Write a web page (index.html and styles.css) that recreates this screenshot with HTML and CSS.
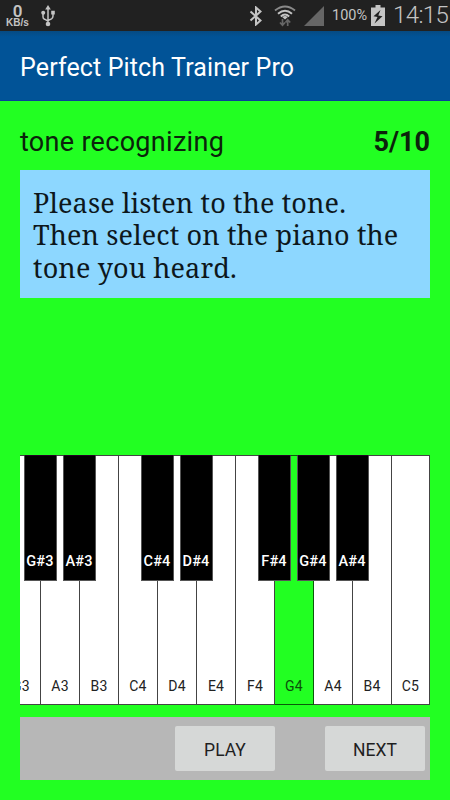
FILE: index.html
```
<!DOCTYPE html>
<html lang="en">
<head>
    <meta charset="utf-8">
    <title>Perfect Pitch Trainer Pro</title>
    <link rel="stylesheet" href="styles.css">
</head>
<body>

    <div class="status-bar">
        <div class="speed">
            <span class="speed-value">0</span>
            <span class="speed-unit">KB/s</span>
        </div>
        <svg class="usb" width="14" height="22" viewBox="0 0 14 22">
            <path d="M7 3v16M2 8v4q0 1.500 1.500 2.200L7 16M12 8v3q0 2-1.500 2.800L7 15.500" fill="none" stroke="#c4c4c4" stroke-width="1.500"/>
            <path d="M7 0l2.800 4.500h-5.600z" fill="#c4c4c4"/>
            <circle cx="7" cy="19" r="2.300" fill="#c4c4c4"/>
            <circle cx="2.200" cy="7.800" r="2" fill="#c4c4c4"/>
            <path d="M10.200 5.800h3.600v3.600h-3.600z" fill="#c4c4c4"/>
        </svg>
        <svg class="bluetooth" width="14" height="20" viewBox="0 0 14 20">
            <path d="M1.500 5.500l10 9L7 18.500V1.500l4.500 4-10 9" fill="none" stroke="#c4c4c4" stroke-width="2"/>
        </svg>
        <svg class="wifi" width="22" height="22" viewBox="0 0 22 22">
            <g fill="none" stroke="#c4c4c4" stroke-width="1.900">
                <path d="M1 5.500Q11-2.500 21 5.500" stroke="#8a8a8a"/>
                <path d="M4 8.800Q11 2.500 18 8.800"/>
                <path d="M6.800 11.500Q11 7.500 15.200 11.500"/>
            </g>
            <path d="M8.200 12Q11 9.800 13.800 12L11 14.500z" fill="#c4c4c4"/>
            <path d="M8.500 14v6M6 17.500l2.500 2.800 2.500-2.800M13.700 21v-6M11.500 17.500l2.200-2.800 2.500 2.800" fill="none" stroke="#666" stroke-width="1.700"/>
        </svg>
        <svg class="signal" width="20" height="20" viewBox="0 0 20 20">
            <path d="M20 0v20H0z" fill="#666"/>
        </svg>
        <span class="percent">100%</span>
        <svg class="battery" width="14" height="21" viewBox="0 0 14 21">
            <path d="M4.500 0h5v2.500H14V21H0V2.500h4.500z" fill="#c4c4c4"/>
            <path d="M9.500 5L2.500 11.200l4 .8-3 6.500 8-7.200-4.200-.8z" fill="#212121"/>
        </svg>
        <span class="clock">14:15</span>
    </div>

    <div class="header">
        <h1>Perfect Pitch Trainer Pro</h1>
    </div>

    <div class="content">
        <div class="exercise">
            <span class="exercise-name">tone recognizing</span>
            <span class="exercise-count">5/10</span>
        </div>

        <div class="instructions">
            Please listen to the tone.<br>
            Then select on the piano the<br>
            tone you heard.
        </div>

        <div class="piano">
            <div class="key">G3<div class="black-key">G#3</div></div>
            <div class="key">A3<div class="black-key">A#3</div></div>
            <div class="key">B3</div>
            <div class="key">C4<div class="black-key">C#4</div></div>
            <div class="key">D4<div class="black-key">D#4</div></div>
            <div class="key">E4</div>
            <div class="key">F4<div class="black-key">F#4</div></div>
            <div class="key selected">G4<div class="black-key">G#4</div></div>
            <div class="key">A4<div class="black-key">A#4</div></div>
            <div class="key">B4</div>
            <div class="key">C5</div>
        </div>

        <div class="buttons">
            <button class="button">PLAY</button>
            <button class="button">NEXT</button>
        </div>
    </div>

</body>
</html>
```
FILE: styles.css
```
* {
    box-sizing: border-box;
}
body {
    margin: 0;
    height: 800px;
    display: flex;
    flex-direction: column;
    background-color: #22ff22;
    font-family: Roboto, sans-serif;
    overflow: hidden;
}
.status-bar {
    height: 31px;
    display: flex;
    align-items: center;
    padding: 0 3px 0 6px;
    background-color: #212121;
    color: #c4c4c4;
}
.speed {
    width: 23px;
    display: flex;
    flex-direction: column;
    align-items: center;
}
.speed-value {
    font-size: 17px;
    font-weight: 600;
    line-height: 14px;
}
.speed-unit {
    font-family: "Liberation Sans", sans-serif;
    font-size: 10px;
    font-weight: bold;
    line-height: 9px;
}
.usb {
    margin-left: 12px;
}
.bluetooth {
    margin-left: auto;
}
.wifi {
    margin-left: 11px;
    margin-top: 1px;
}
.signal {
    margin-left: 8px;
}
.percent {
    margin-left: 8px;
    width: 35px;
    font-size: 14.5px;
    white-space: nowrap;
}
.battery {
    margin-left: 4px;
}
.clock {
    margin-left: 8px;
    margin-top: -2px;
    width: 54px;
    font-size: 24px;
    font-weight: 300;
    letter-spacing: -0.6px;
    white-space: nowrap;
}
.header {
    height: 70px;
    display: flex;
    align-items: center;
    padding: 3px 20px 0;
    background: linear-gradient(#064a82, #015397 6px);
    border-bottom: 1px solid #0a3f9b;
}
.header h1 {
    margin: 0;
    color: #fff;
    font-size: 25px;
    font-weight: normal;
    letter-spacing: 0.13px;
}
.content {
    flex-grow: 1;
    display: flex;
    flex-direction: column;
    padding: 25px 20px 20px;
}
.exercise {
    height: 44px;
    display: flex;
    justify-content: space-between;
    line-height: 33px;
    color: #0b230b;
    font-size: 27px;
}
.exercise-name {
    letter-spacing: 0.3px;
}
.exercise-count {
    font-weight: bold;
}
.instructions {
    height: 128px;
    padding: 16.5px 13px;
    background-color: #8dd7ff;
    color: #0d171c;
    font-family: "Noto Serif", "DejaVu Serif Condensed", "DejaVu Serif", serif;
    font-size: 27px;
    letter-spacing: 0.14px;
    line-height: 32.5px;
    white-space: nowrap;
}
.piano {
    height: 250px;
    margin-top: 157px;
    display: flex;
    overflow: hidden;
}
.key {
    position: relative;
    flex: 0 0 39px;
    display: flex;
    align-items: flex-end;
    justify-content: center;
    padding-bottom: 10px;
    background-color: #fff;
    border: 1px solid #444;
    border-left: none;
    color: #222;
    font-size: 14px;
    line-height: 16px;
    letter-spacing: 0.2px;
}
.key:first-child {
    margin-left: -18px;
}
.key:last-child {
    flex-basis: 38px;
}
.selected {
    background-color: #22ff22;
    border-color: #0a5a0a;
    color: #0b4f0b;
}
.black-key {
    position: absolute;
    z-index: 1;
    top: -1px;
    right: -17px;
    width: 33px;
    height: 126px;
    padding: 98px 1px 0 0;
    background-color: #000;
    border: 1px solid #555;
    border-top-color: #202;
    color: #fff;
    font-size: 14.5px;
    font-weight: 500;
    text-align: center;
}
.buttons {
    height: 63px;
    margin-top: 12px;
    display: flex;
    justify-content: flex-end;
    align-items: center;
    gap: 50px;
    padding: 0 5px;
    background-color: #b7b7b7;
}
.button {
    width: 100px;
    height: 45px;
    padding-top: 3px;
    background-color: #d6d8d7;
    border: none;
    border-radius: 2px;
    color: #1f1f1f;
    font-family: Roboto, sans-serif;
    font-size: 17.5px;
    cursor: pointer;
}
```
